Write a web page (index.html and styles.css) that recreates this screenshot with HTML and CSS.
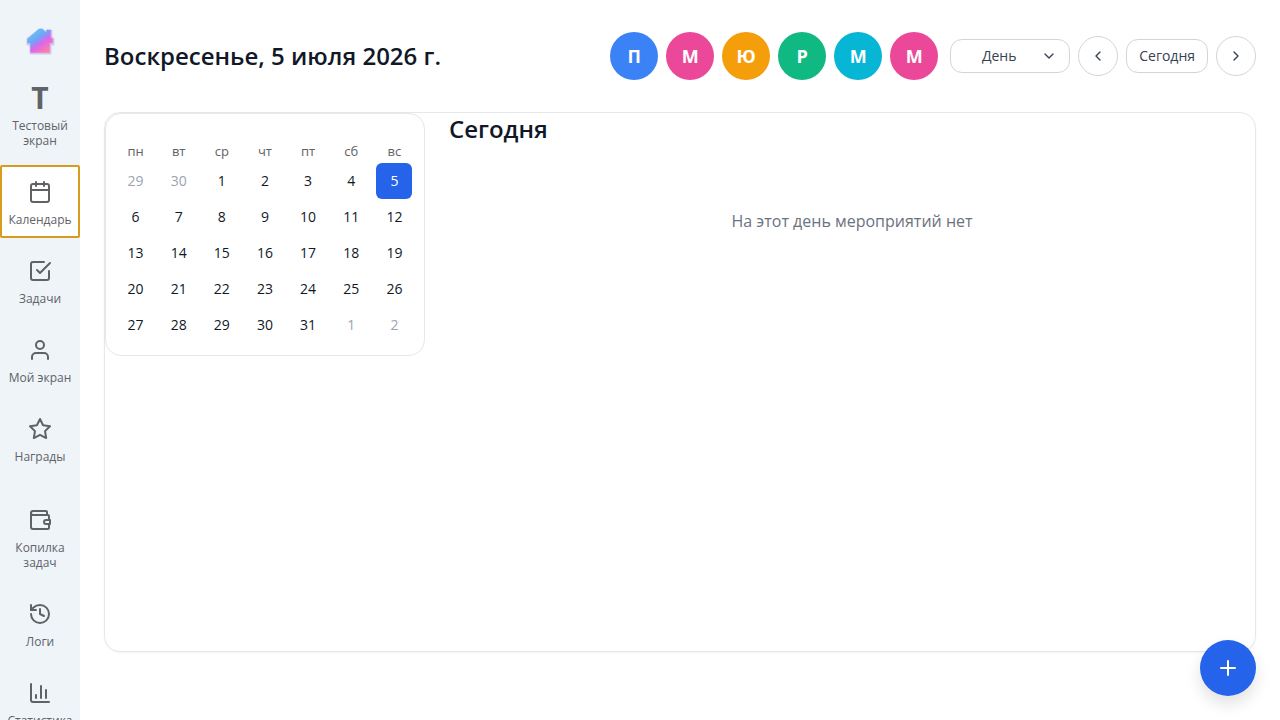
FILE: index.html
```html
<!DOCTYPE html>
<html lang="ru">
<head>
    <meta charset="UTF-8">
    <meta name="viewport" content="width=device-width, initial-scale=1.0">
    <title>Календарь</title>
    <link rel="stylesheet" href="styles.css">
</head>
<body>
    <aside class="sidebar">
        <a href="#" class="logo" aria-label="Главная">
            <svg width="32" height="32" viewBox="0 0 32 32">
                <defs>
                    <linearGradient id="house" x1="0.1" y1="0.15" x2="0.75" y2="1">
                        <stop offset="0" stop-color="#5cc8f5"/>
                        <stop offset="0.35" stop-color="#6fa4f6"/>
                        <stop offset="0.6" stop-color="#d968ee"/>
                        <stop offset="1" stop-color="#ff7fa0"/>
                    </linearGradient>
                    <filter id="glow" x="-20%" y="-20%" width="140%" height="140%">
                        <feGaussianBlur stdDeviation="0.7"/>
                    </filter>
                </defs>
                <path d="M16 6 4 15v5h3v9h19v-9h3v-5l-2-2V7h-4v3l-5-4z" fill="#d3c5f3" stroke="#d3c5f3" stroke-width="3" stroke-linejoin="round" filter="url(#glow)"/>
                <path d="M15 5.500 4 15.500v3h3V28h18v-9.500h3v-3l-2-2V6.500h-3v4l-5-5z" fill="url(#house)" stroke="url(#house)" stroke-width="1.500" stroke-linejoin="round"/>
            </svg>
        </a>
        <nav class="nav">
            <a href="#" class="nav-item">
                <span class="nav-letter">Т</span>
                <span>Тестовый экран</span>
            </a>
            <a href="#" class="nav-item active">
                <svg class="icon" viewBox="0 0 24 24"><path d="M8 2v4M16 2v4M3 10h18"/><rect x="3" y="4" width="18" height="18" rx="2"/></svg>
                <span>Календарь</span>
            </a>
            <a href="#" class="nav-item">
                <svg class="icon" viewBox="0 0 24 24"><path d="m9 11 3 3L22 4"/><path d="M21 12v7a2 2 0 0 1-2 2H5a2 2 0 0 1-2-2V5a2 2 0 0 1 2-2h11"/></svg>
                <span>Задачи</span>
            </a>
            <a href="#" class="nav-item">
                <svg class="icon" viewBox="0 0 24 24"><path d="M20 21v-2a4 4 0 0 0-4-4H8a4 4 0 0 0-4 4v2"/><circle cx="12" cy="7" r="4"/></svg>
                <span>Мой экран</span>
            </a>
            <a href="#" class="nav-item">
                <svg class="icon" viewBox="0 0 24 24"><path d="m12 2 3.090 6.260L22 9.270l-5 4.870 1.180 6.880L12 17.770l-6.180 3.250L7 14.140 2 9.270l6.910-1.010z"/></svg>
                <span>Награды</span>
            </a>
        </nav>
        <nav class="nav">
            <a href="#" class="nav-item">
                <svg class="icon" viewBox="0 0 24 24"><path d="M19 7V4a1 1 0 0 0-1-1H5a2 2 0 0 0 0 4h15a1 1 0 0 1 1 1v3M21 16v4a1 1 0 0 1-1 1H5a2 2 0 0 1-2-2V5"/><path d="M22 12h-4a2 2 0 0 0 0 4h4z"/></svg>
                <span>Копилка задач</span>
            </a>
            <a href="#" class="nav-item">
                <svg class="icon" viewBox="0 0 24 24"><path d="M3 12a9 9 0 1 0 9-9 9.750 9.750 0 0 0-6.740 2.740L3 8"/><path d="M3 3v5h5M12 7v5l4 2"/></svg>
                <span>Логи</span>
            </a>
            <a href="#" class="nav-item">
                <svg class="icon" viewBox="0 0 24 24"><path d="M3 3v16a2 2 0 0 0 2 2h16M18 17V9M13 17V5M8 17v-3"/></svg>
                <span>Статистика</span>
            </a>
        </nav>
    </aside>

    <main class="main">
        <header class="header">
            <h1>Воскресенье, 5 июля 2026 г.</h1>
            <div class="controls">
                <div class="avatars">
                    <button class="avatar blue">П</button>
                    <button class="avatar pink">М</button>
                    <button class="avatar orange">Ю</button>
                    <button class="avatar green">Р</button>
                    <button class="avatar cyan">М</button>
                    <button class="avatar pink">М</button>
                </div>
                <div class="period">
                    <div class="select-wrap">
                        <select class="control" aria-label="Период">
                            <option>День</option>
                            <option>Неделя</option>
                            <option>Месяц</option>
                        </select>
                        <svg class="icon small" viewBox="0 0 24 24"><path d="m6 9 6 6 6-6"/></svg>
                    </div>
                    <button class="control round" aria-label="Назад"><svg class="icon small" viewBox="0 0 24 24"><path d="m15 18-6-6 6-6"/></svg></button>
                    <button class="control">Сегодня</button>
                    <button class="control round" aria-label="Вперёд"><svg class="icon small" viewBox="0 0 24 24"><path d="m9 18 6-6-6-6"/></svg></button>
                </div>
            </div>
        </header>

        <section class="card">
            <div class="calendar">
                <table>
                    <thead>
                        <tr><th>пн</th><th>вт</th><th>ср</th><th>чт</th><th>пт</th><th>сб</th><th>вс</th></tr>
                    </thead>
                    <tbody id="days"></tbody>
                </table>
            </div>
            <div class="events">
                <h2>Сегодня</h2>
                <p>На этот день мероприятий нет</p>
            </div>
        </section>
    </main>

    <button class="add-btn" aria-label="Добавить"><svg class="icon" viewBox="0 0 24 24"><path d="M5 12h14M12 5v14"/></svg></button>

    <script>
        const days = document.getElementById('days');
        const selected = new Date(2026, 6, 5);
        const date = new Date(2026, 5, 29);

        // Five weeks starting from Monday
        for (let week = 0; week < 5; week++) {
            const row = days.insertRow();
            for (let i = 0; i < 7; i++) {
                const btn = document.createElement('button');
                btn.className = 'day';
                btn.textContent = date.getDate();
                if (date.getMonth() !== selected.getMonth()) {
                    btn.classList.add('outside');
                }
                if (date.getTime() === selected.getTime()) {
                    btn.classList.add('selected');
                }
                row.insertCell().appendChild(btn);
                date.setDate(date.getDate() + 1);
            }
        }
    </script>
</body>
</html>
```
FILE: styles.css
```css
* {
    box-sizing: border-box;
}

body {
    margin: 0;
    display: flex;
    height: 100vh;
    overflow: hidden;
    font-family: "Open Sans", sans-serif;
    color: #111827;
    background-color: #fff;
}

button,
select {
    font-family: inherit;
    cursor: pointer;
}

h1,
h2 {
    margin: 0;
    font-size: 24px;
    line-height: 32px;
    font-weight: 600;
}

.icon {
    width: 24px;
    height: 24px;
    fill: none;
    stroke: currentColor;
    stroke-width: 2;
    stroke-linecap: round;
    stroke-linejoin: round;
}

.icon.small {
    width: 16px;
    height: 16px;
}

/* sidebar */

.sidebar {
    flex: none;
    width: 80px;
    overflow: hidden;
    background-color: #eff4f9;
}

.logo {
    display: flex;
    justify-content: center;
    padding: 24px 0 15px;
}

.nav {
    display: flex;
    flex-direction: column;
    gap: 6px;
}

.nav + .nav {
    margin-top: 18px;
}

.nav-item {
    display: flex;
    flex-direction: column;
    align-items: center;
    gap: 8px;
    padding: 15px 4px 11px;
    font-size: 12px;
    line-height: 15px;
    font-weight: 500;
    text-align: center;
    text-decoration: none;
    color: #5f6368;
}

.nav-item.active {
    background-color: #fff;
    border-radius: 2px;
    outline: 2px solid #d79b1e;
    outline-offset: -2px;
}

.nav-letter {
    font-size: 30px;
    line-height: 24px;
    font-weight: 700;
}

/* header */

.main {
    flex: 1;
    min-width: 0;
    display: flex;
    flex-direction: column;
    gap: 32px;
    padding: 32px 24px 68px;
}

.header {
    display: flex;
    align-items: center;
    justify-content: space-between;
}

.controls {
    display: flex;
    align-items: center;
    gap: 12px;
}

.avatars,
.period {
    display: flex;
    align-items: center;
    gap: 8px;
}

.avatar {
    width: 48px;
    height: 48px;
    padding: 0;
    border: none;
    border-radius: 50%;
    color: #fff;
    font-size: 18px;
    font-weight: 700;
}

.blue { background-color: #3b82f6; }
.pink { background-color: #ec4899; }
.orange { background-color: #f59e0b; }
.green { background-color: #10b981; }
.cyan { background-color: #06b6d4; }

.control {
    height: 34px;
    padding: 0 12px 2px;
    border: 1px solid #d1d5db;
    border-radius: 12px;
    background-color: #fff;
    color: #374151;
    font-size: 14px;
    font-weight: 500;
}

.control.round {
    display: flex;
    align-items: center;
    justify-content: center;
    width: 40px;
    height: 40px;
    padding: 0;
    border-radius: 50%;
}

.select-wrap {
    position: relative;
}

.select-wrap select {
    display: block;
    width: 120px;
    padding: 0 33px 2px 11px;
    appearance: none;
    text-align: center;
    text-align-last: center;
}

.select-wrap .icon {
    position: absolute;
    top: 9px;
    right: 13px;
    color: #374151;
    pointer-events: none;
}

/* day view */

.card {
    flex: 1;
    display: flex;
    align-items: flex-start;
    gap: 24px;
    border: 1px solid #e5e7eb;
    border-radius: 16px;
    box-shadow: 0 1px 2px rgba(0, 0, 0, .05);
}

.calendar {
    flex: none;
    width: 320px;
    padding: 28px 8px 12px;
    border: 1px solid #e5e7eb;
    border-radius: 16px;
}

.calendar table {
    width: 100%;
    table-layout: fixed;
    border-collapse: collapse;
}

.calendar th {
    height: 21px;
    padding: 0 0 2px;
    color: #5f6368;
    font-size: 13px;
    line-height: 19px;
    font-weight: 400;
}

.calendar td {
    padding: 0;
    text-align: center;
}

.day {
    display: block;
    width: 36px;
    height: 36px;
    margin: 0 auto;
    padding: 0 0 2px;
    border: none;
    border-radius: 6px;
    background: none;
    color: #111827;
    font-size: 14px;
}

.day.outside {
    color: #9ca3af;
}

.day.selected {
    background-color: #2563eb;
    color: #fff;
}

.events {
    flex: 1;
}

.events p {
    margin: 64px 0;
    color: #6b7280;
    font-size: 16px;
    line-height: 24px;
    text-align: center;
}

.add-btn {
    position: fixed;
    right: 24px;
    bottom: 24px;
    display: flex;
    align-items: center;
    justify-content: center;
    width: 56px;
    height: 56px;
    padding: 0;
    border: none;
    border-radius: 50%;
    background-color: #2563eb;
    color: #fff;
    box-shadow: 0 8px 16px rgba(0, 0, 0, .12);
}
```
